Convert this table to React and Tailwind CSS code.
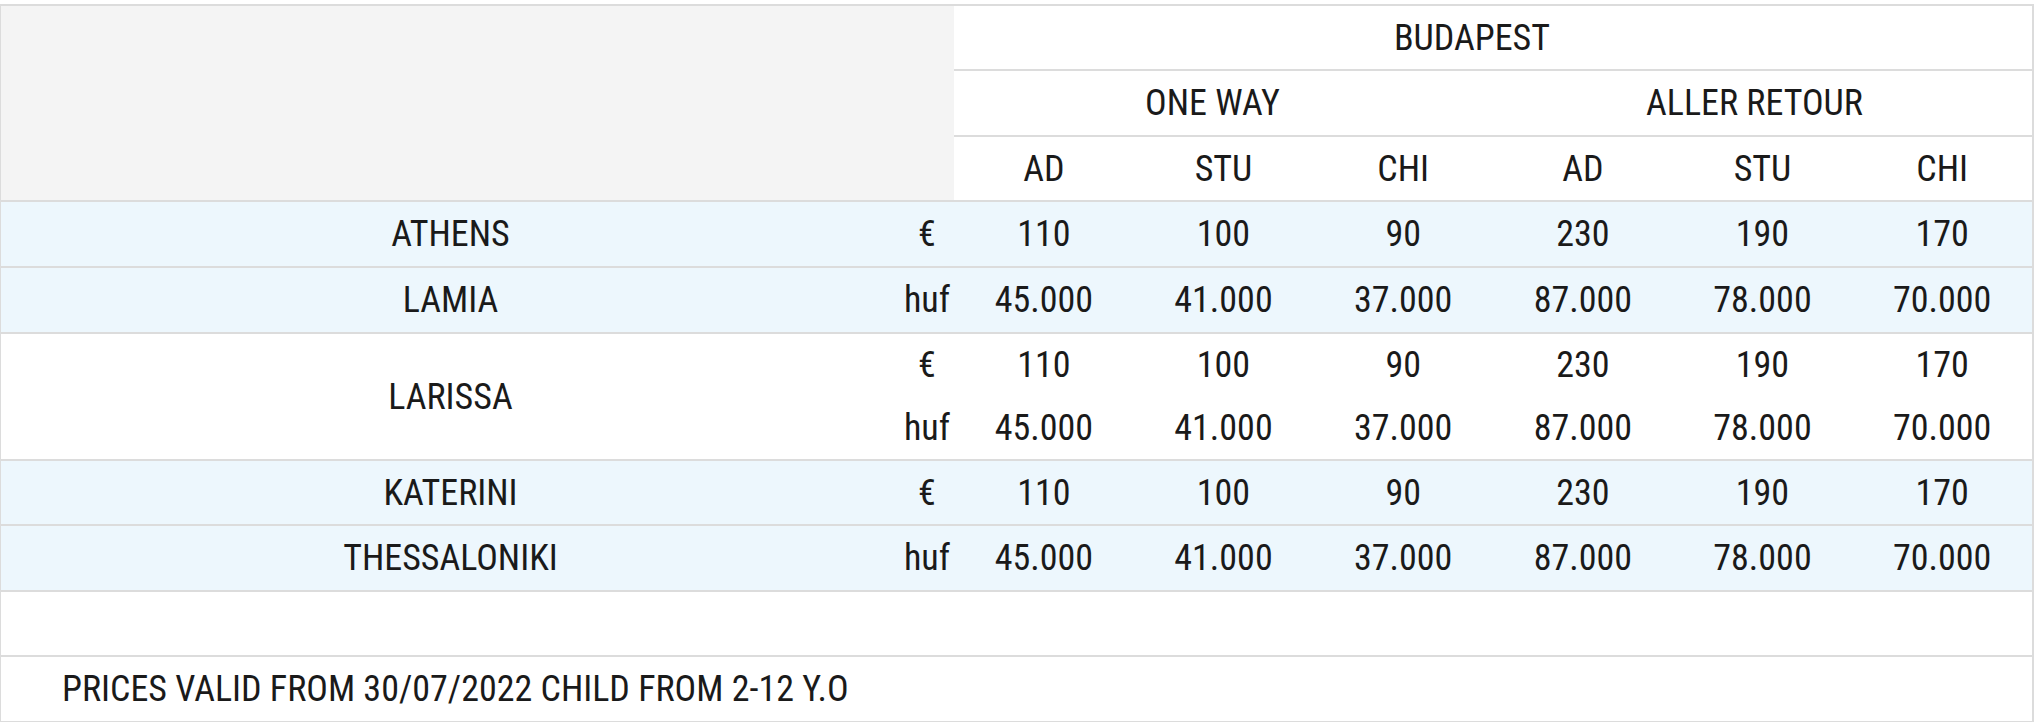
import React from "react";

const cols = "grid grid-cols-[899px_54px_repeat(6,minmax(0,1fr))] items-center text-center";

const euro = ["110", "100", "90", "230", "190", "170"];
const huf = ["45.000", "41.000", "37.000", "87.000", "78.000", "70.000"];

function PriceRow({ city, currency, values, blue, h }) {
  return (
    <div className={`${cols} ${h} border-b-2 border-[#dcdcdc] ${blue ? "bg-[#edf7fd]" : "bg-white"}`}>
      <div>{city}</div>
      <div>{currency}</div>
      {values.map((v, i) => (
        <div key={i}>{v}</div>
      ))}
    </div>
  );
}

export default function App() {
  return (
    <div className="bg-white pt-[4px] font-['Roboto_Condensed',Roboto,sans-serif] [font-stretch:condensed] text-[36px] leading-none text-[#1a1a1a]">
      <div className="w-[2034px] border-t-2 border-l border-r-2 border-[#dcdcdc]">
        {/* header */}
        <div className="flex border-b-2 border-[#dcdcdc]">
          <div className="w-[953px] bg-[#f4f4f4]"></div>
          <div className="flex-1 flex flex-col">
            <div className="h-[65px] flex items-center justify-center pr-[42px] border-b-2 border-[#dcdcdc]">
              BUDAPEST
            </div>
            <div className="h-[66px] grid grid-cols-2 items-center text-center border-b-2 border-[#dcdcdc]">
              <div className="pr-[22px]">ONE WAY</div>
              <div className="pr-[16px]">ALLER RETOUR</div>
            </div>
            <div className="h-[63px] grid grid-cols-6 items-center text-center">
              <div>AD</div>
              <div>STU</div>
              <div>CHI</div>
              <div>AD</div>
              <div>STU</div>
              <div>CHI</div>
            </div>
          </div>
        </div>

        <PriceRow city="ATHENS" currency="€" values={euro} blue h="h-[66px]" />
        <PriceRow city="LAMIA" currency="huf" values={huf} blue h="h-[66px]" />

        {/* larissa, two currencies */}
        <div className={`${cols} grid-rows-[62px_63px] h-[127px] border-b-2 border-[#dcdcdc]`}>
          <div className="row-span-2">LARISSA</div>
          <div>€</div>
          {euro.map((v, i) => (
            <div key={"e" + i}>{v}</div>
          ))}
          <div>huf</div>
          {huf.map((v, i) => (
            <div key={"h" + i}>{v}</div>
          ))}
        </div>

        <PriceRow city="KATERINI" currency="€" values={euro} blue h="h-[65px]" />
        <PriceRow city="THESSALONIKI" currency="huf" values={huf} blue h="h-[66px]" />

        <div className="h-[65px] border-b-2 border-[#dcdcdc]"></div>
        <div className="h-[66px] flex items-center pl-[61px] border-b-2 border-[#dcdcdc]">
          PRICES VALID FROM 30/07/2022 CHILD FROM 2-12 Y.O
        </div>
      </div>
    </div>
  );
}
